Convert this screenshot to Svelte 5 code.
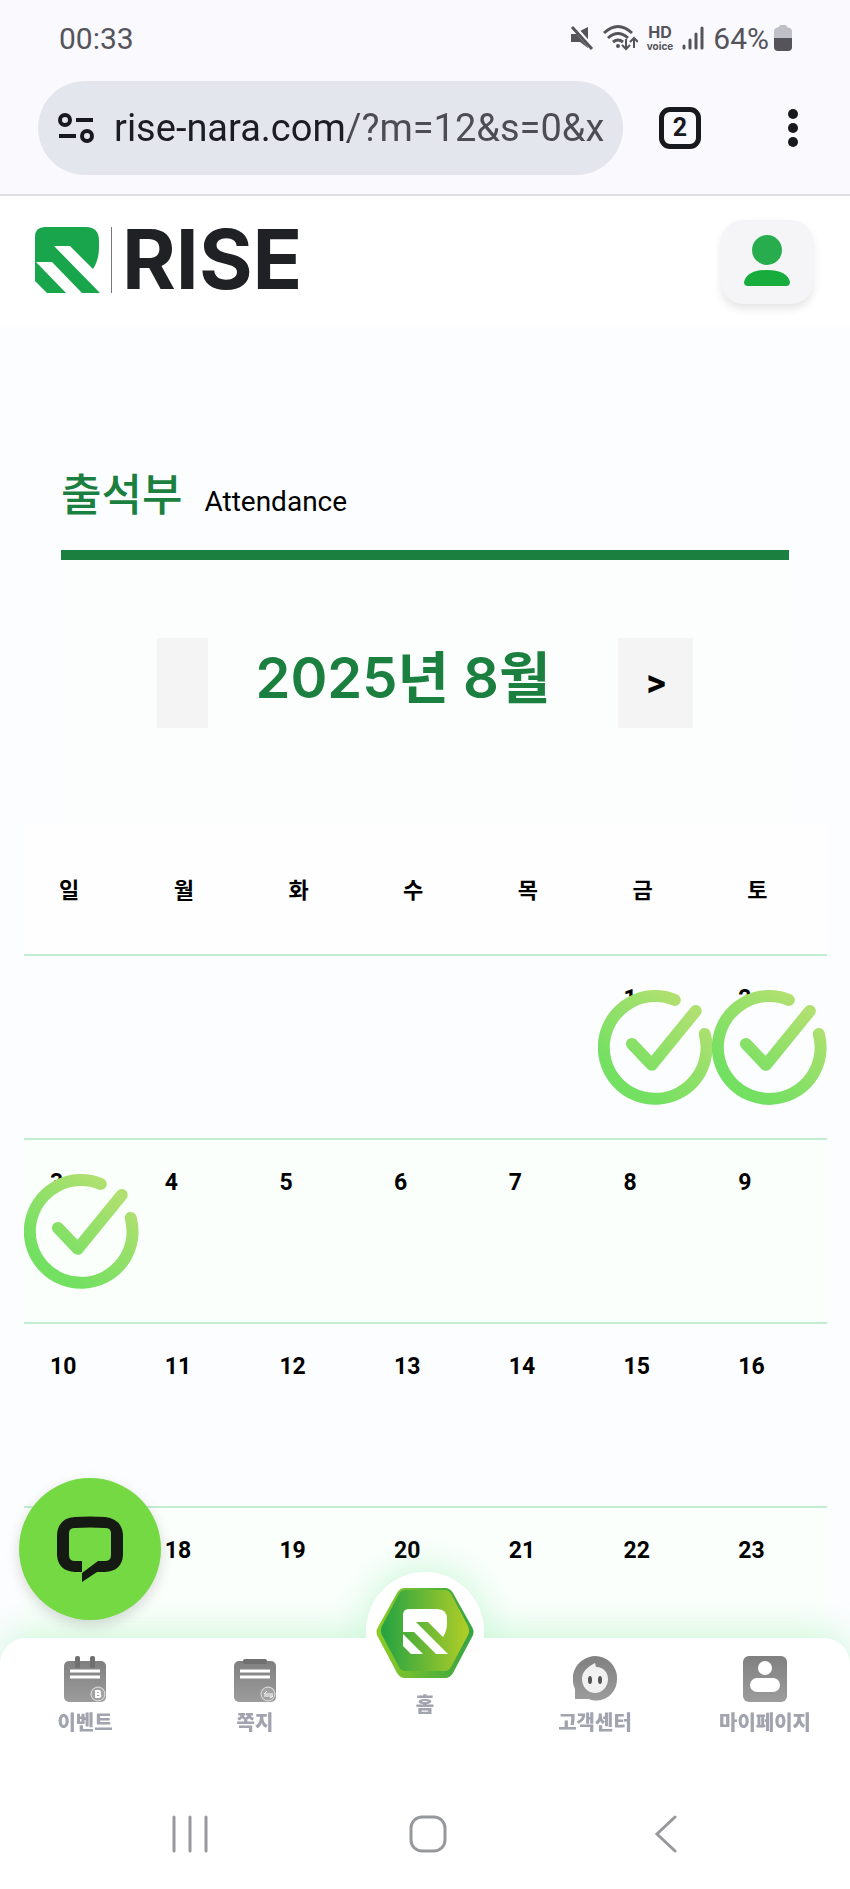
<script>
    const jours = ["일", "월", "화", "수", "목", "금", "토"];
    const semaines = [
        [null, null, null, null, null, 1, 2],
        [3, 4, 5, 6, 7, 8, 9],
        [10, 11, 12, 13, 14, 15, 16],
        [17, 18, 19, 20, 21, 22, 23],
    ];
    const presences = [1, 2, 3];

    let url = "rise-nara.com/?m=12&s=0&x";
</script>

<div class="screen">
    <div class="status">
        <span>00:33</span>
        <div class="status_icons">
            <svg width="24" height="24" viewBox="0 0 24 24" aria-hidden="true">
                <path d="M1 8h5l3-2 9 11v5l-8-6H1zM10 5l8-4v13z" fill="#55545a" />
                <path d="M3 0l20 23" stroke="#f9f9fe" stroke-width="5" />
                <path d="M2 1l20 22" stroke="#55545a" stroke-width="3" />
            </svg>
            <svg width="35" height="28" viewBox="0 0 35 28" fill="none" stroke="#55545a" stroke-width="3" aria-hidden="true">
                <path d="M1 9q14-13 28 0M5 14q10-9 20 0M10 18q5-4 10 0" />
                <circle cx="15" cy="22" r="2" fill="#55545a" stroke="none" />
                <path d="M23 15v10M19 21l4 4 4-4M31 24V14M27 18l4-4 4 4" stroke-width="2" />
            </svg>
            <div class="hd"><b>HD</b><small>voice</small></div>
            <svg width="22" height="24" viewBox="0 0 22 24" stroke="#55545a" stroke-width="3" stroke-linecap="round" aria-hidden="true">
                <path d="M2 20v2M8 14v8M14 8v14M20 2v20" />
            </svg>
            <span class="percent">64%</span>
            <svg width="18" height="26" viewBox="0 0 18 26" aria-hidden="true">
                <path d="M5 2q0-2 2-2h4q2 0 2 2l3 1q2 1 2 3v7H0V6q0-2 2-3z" fill="#bfbfc8" />
                <path d="M0 13h18v9q0 4-4 4H4q-4 0-4-4z" fill="#55545a" />
            </svg>
        </div>
    </div>

    <div class="toolbar">
        <label class="adresse">
            <svg width="36" height="30" viewBox="0 0 36 30" fill="none" stroke="#17191f" stroke-width="4" aria-hidden="true">
                <circle cx="7" cy="7" r="5" />
                <circle cx="29" cy="23" r="5" />
                <path d="M18 7h17M1 23h17" />
            </svg>
            <input type="text" aria-label="URL" bind:value={url}>
        </label>
        <button class="onglets">2</button>
        <button class="menu" aria-label="Menu">
            <svg width="10" height="38" viewBox="0 0 10 38" fill="#17191f">
                <circle cx="5" cy="5" r="5" />
                <circle cx="5" cy="19" r="5" />
                <circle cx="5" cy="33" r="5" />
            </svg>
        </button>
    </div>

    <header>
        <a href="./" class="logo">
            <svg width="65" height="66" viewBox="0 0 65 66" aria-hidden="true">
                <path d="M10 0h41q13 0 13 14v6q0 13-6 22L35 19H19l46 47H47L17 35H0V10Q0 0 10 0z" fill="#19a54c" />
                <path d="M0 34l31 32H12L0 54z" fill="#19a54c" />
            </svg>
            <span class="trait"></span>
            <span class="marque">RISE</span>
        </a>
        <button class="profil" aria-label="Profil">
            <svg width="46" height="52" viewBox="0 0 46 52" aria-hidden="true">
                <circle cx="23" cy="15" r="15" fill="#27ad4d" />
                <path d="M0 47q3-12 23-12t23 12q0 4-4 4H4q-4 0-4-4z" fill="#18ac3c" />
            </svg>
        </button>
    </header>

    <main>
        <div class="titre">
            <h1>출석부</h1>
            <span>Attendance</span>
        </div>

        <div class="mois">
            <button class="precedent" aria-label="이전"></button>
            <h2>2025년 8월</h2>
            <button class="suivant">&gt;</button>
        </div>

        <table>
            <thead>
                <tr>
                    {#each jours as jour}
                        <th scope="col">{jour}</th>
                    {/each}
                </tr>
            </thead>
            <tbody>
                {#each semaines as semaine}
                    <tr>
                        {#each semaine as date}
                            <td>
                                {#if date}{date}{/if}
                                {#if presences.includes(date)}
                                    <svg class="coche" viewBox="0 0 115 115" aria-hidden="true">
                                        <defs>
                                            <linearGradient id={"degrade" + date} gradientUnits="userSpaceOnUse" x1="35" y1="95" x2="95" y2="20">
                                                <stop offset="0" stop-color="#73e062" />
                                                <stop offset="1" stop-color="#b0e070" />
                                            </linearGradient>
                                        </defs>
                                        <g fill="none" stroke={"url(#degrade" + date + ")"} stroke-width="12" stroke-linecap="round" stroke-linejoin="round">
                                            <path d="M77 10A51.5 51.5 0 1 0 107 44" />
                                            <path d="M34 54l20 21 44-54" />
                                        </g>
                                    </svg>
                                {/if}
                            </td>
                        {/each}
                    </tr>
                {/each}
            </tbody>
        </table>
    </main>

    <div class="bas">
        <button class="chat" aria-label="Chat">
            <svg width="66" height="66" viewBox="0 0 66 66" aria-hidden="true">
                <path d="M18 1Q33 0 48 1q17 2 18 18v20q-1 16-18 17h-8L25 66V57L41 45h7q6 0 6-6V17q0-5-6-5-15-1-30 0-6 0-6 5v22q0 6 6 6h7v11h-7Q1 55 0 39V19Q1 2 18 1z" fill="#151a13" />
            </svg>
        </button>
        <footer>
            <nav>
                <a href="#event">
                    <svg width="42" height="47" viewBox="0 0 42 47" aria-hidden="true">
                        <defs>
                            <linearGradient id="gris" x2="0" y2="1">
                                <stop offset="0" stop-color="#808080" />
                                <stop offset="1" stop-color="#9c9c9c" />
                            </linearGradient>
                        </defs>
                        <rect y="5" width="42" height="41" rx="5" fill="url(#gris)" />
                        <rect x="11" width="5" height="12" rx="2" fill="#707070" />
                        <rect x="26" width="5" height="12" rx="2" fill="#707070" />
                        <path d="M6 15h30M6 21h30" stroke="#fff" stroke-width="3" />
                        <circle cx="34" cy="38" r="7" fill="#a2a2a2" stroke="#e4e4e4" stroke-width="1" />
                        <path d="M32 35h3q2 1 0 3 3 2 0 3h-3zM32 38h3" fill="none" stroke="#fff" stroke-width="2" />
                    </svg>
                    이벤트
                </a>
                <a href="#message">
                    <svg width="42" height="47" viewBox="0 0 42 47" aria-hidden="true">
                        <rect y="5" width="42" height="41" rx="5" fill="url(#gris)" />
                        <rect x="9" y="3" width="24" height="5" rx="2" fill="#707070" />
                        <path d="M6 15h30M6 21h30" stroke="#fff" stroke-width="3" />
                        <circle cx="34" cy="38" r="7" fill="#a2a2a2" stroke="#e4e4e4" stroke-width="1" />
                        <path d="M39 38h-9l3-3M30 40h9l-3 2" fill="none" stroke="#fff" stroke-width="1" />
                    </svg>
                    쪽지
                </a>
                <a href="#home" class="accueil">
                    <span class="rond">
                        <svg width="98" height="92" viewBox="0 0 98 92" aria-hidden="true">
                            <defs>
                                <linearGradient id="hexa">
                                    <stop offset="0" stop-color="#23a243" />
                                    <stop offset="1" stop-color="#b1ce26" />
                                </linearGradient>
                                <linearGradient id="bord">
                                    <stop offset="0" stop-color="#8ecb25" />
                                    <stop offset="1" stop-color="#35a344" />
                                </linearGradient>
                            </defs>
                            <path d="M29 1h40q5 0 8 5l19 34q3 5 0 10L77 86q-3 5-8 5H29q-5 0-8-5L2 50q-3-5 0-10L21 6q3-5 8-5z" fill="url(#bord)" />
                            <path d="M30 3h38q5 0 7 4l17 32q2 5 0 9L75 80q-2 4-7 4H30q-5 0-7-4L6 48q-2-5 0-9L23 7q2-4 7-4z" fill="url(#hexa)" />
                            <g fill="#fff">
                                <path d="M33 22h28q10 0 10 10v4q0 8-4 14L52 35H40l32 32H60L38 45H27V28q0-6 6-6z" />
                                <path d="M27 47l20 20H35l-8-8z" />
                            </g>
                        </svg>
                    </span>
                    홈
                </a>
                <a href="#support">
                    <svg width="44" height="47" viewBox="0 0 44 47" aria-hidden="true">
                        <path d="M22 0a22 22 0 0 1 22 23c0 18-18 25-28 20H2V33A23 23 0 0 1 22 0z" fill="url(#gris)" />
                        <path d="M22 7l1 4c9 0 12 7 12 12 0 8-6 14-13 14S9 31 9 23c0-8 6-12 13-16z" fill="#f1f1f1" />
                        <ellipse cx="17" cy="24" rx="2" ry="4" fill="#555" />
                        <ellipse cx="27" cy="24" rx="2" ry="4" fill="#555" />
                    </svg>
                    고객센터
                </a>
                <a href="#mypage">
                    <svg width="44" height="47" viewBox="0 0 44 47" aria-hidden="true">
                        <rect width="44" height="46" rx="6" fill="url(#gris)" />
                        <circle cx="22" cy="12" r="7" fill="#fff" />
                        <rect x="7" y="22" width="30" height="14" rx="7" fill="#fff" />
                    </svg>
                    마이페이지
                </a>
            </nav>
            <div class="systeme">
                <button aria-label="Recents">
                    <svg width="36" height="38" viewBox="0 0 36 38"><path d="M2 2v34M18 2v34M34 2v34" /></svg>
                </button>
                <button aria-label="Home">
                    <svg width="38" height="38" viewBox="0 0 38 38"><rect x="2" y="2" width="34" height="34" rx="11" /></svg>
                </button>
                <button aria-label="Back">
                    <svg width="24" height="38" viewBox="0 0 24 38"><path d="M21 2L3 19l18 17" /></svg>
                </button>
            </div>
        </footer>
    </div>
</div>

<style>
    :global(body){
        margin: 0px;
        background-color: #fcfdff;
    }
    .screen{
        display: flex;
        flex-direction: column;
        height: 100vh;
        font-family: Roboto, "Noto Sans CJK KR", sans-serif;
        color: #000;
    }
    button{
        border: none;
        padding: 0px;
        background: none;
        font-family: inherit;
        color: inherit;
        cursor: pointer;
    }
    svg{
        display: block;
        flex: none;
    }

    .status{
        display: flex;
        justify-content: space-between;
        align-items: center;
        height: 76px;
        padding: 0px 58px 0px 59px;
        background-color: #f9f9fe;
        color: #55545a;
        font-size: 30px;
    }
    .status_icons{
        display: flex;
        align-items: center;
        gap: 9px;
    }
    .percent{
        margin-right: -4px;
    }
    .hd{
        display: flex;
        flex-direction: column;
        align-items: center;
        font-family: Inter, sans-serif;
        font-size: 16px;
        line-height: 16px;
    }
    .hd small{
        font-size: 10px;
        font-weight: 700;
        line-height: 12px;
    }

    .toolbar{
        display: flex;
        align-items: center;
        padding: 5px 50px 19px 38px;
        background-color: #f9f9fe;
        border-bottom: 2px solid #dfdfe6;
    }
    .adresse{
        display: flex;
        align-items: center;
        gap: 20px;
        flex: 1;
        height: 94px;
        box-sizing: border-box;
        padding: 0px 18px 0px 20px;
        border-radius: 47px;
        background-color: #e4e6ed;
    }
    .adresse input{
        flex: 1;
        min-width: 0px;
        padding: 0px;
        border: none;
        outline: none;
        font-family: inherit;
        font-size: 38px;
        /* le domaine est plus foncé que le reste de l'adresse */
        background: linear-gradient(90deg, #1b1d23 232px, #4b4d53 236px);
        background-clip: text;
        color: transparent;
    }
    .onglets{
        width: 42px;
        height: 42px;
        margin-left: 36px;
        border: 5px solid #17191f;
        border-radius: 11px;
        font-size: 25px;
        font-weight: 700;
        line-height: 32px;
        color: #17191f;
    }
    .menu{
        display: flex;
        justify-content: center;
        width: 14px;
        margin-left: 85px;
    }

    header{
        display: flex;
        justify-content: space-between;
        align-items: flex-start;
        padding: 24px 37px 22px 35px;
        background-color: #fff;
    }
    .logo{
        display: flex;
        align-items: center;
        margin-top: 7px;
        text-decoration: none;
    }
    .trait{
        width: 1px;
        height: 66px;
        margin: 0px 10px 0px 11px;
        background-color: #77787c;
    }
    .marque{
        font-family: Inter, sans-serif;
        font-size: 82px;
        font-weight: 700;
        line-height: 66px;
        color: #202124;
    }
    .profil{
        display: flex;
        justify-content: center;
        width: 92px;
        height: 84px;
        padding-top: 15px;
        border-radius: 22px;
        background-color: #f5f5f7;
        box-shadow: 0px 5px 8px rgba(0, 0, 0, 0.1);
    }

    main{
        flex: 1;
        min-height: 0px;
        overflow: hidden;
        padding: 0px 23px 0px 24px;
    }
    .titre{
        display: flex;
        align-items: baseline;
        gap: 22px;
        margin: 138px 38px 0px 37px;
        padding-bottom: 22px;
        border-bottom: 10px solid #1b7f3f;
    }
    .titre h1{
        margin: 0px;
        font-size: 44px;
        font-weight: 500;
        line-height: 64px;
        color: #1b7f3f;
    }
    .titre span{
        font-size: 28px;
    }
    .mois{
        display: flex;
        justify-content: center;
        align-items: flex-start;
        margin: 0px 38px 0px 37px;
        padding: 78px 0px 97px;
        background-color: #fbfefc;
    }
    .mois h2{
        margin: 0px 68px 0px 48px;
        font-family: Inter, "Noto Sans CJK KR", sans-serif;
        font-size: 56px;
        font-weight: 600;
        line-height: 80px;
        color: #1b7f3f;
    }
    .mois button{
        height: 90px;
        background-color: #f4f4f4;
        font-size: 38px;
        font-weight: 700;
    }
    .precedent{
        width: 51px;
    }
    .suivant{
        width: 75px;
    }

    table{
        width: 100%;
        table-layout: fixed;
        border-collapse: collapse;
    }
    thead{
        background-color: #fefefe;
    }
    th{
        height: 130px;
        padding: 0px 0px 4px 35px;
        box-sizing: border-box;
        font-size: 22px;
        text-align: left;
    }
    td{
        position: relative;
        height: 184px;
        box-sizing: border-box;
        padding: 29px 0px 0px 26px;
        border-top: 2px solid #c3edd2;
        vertical-align: top;
        font-size: 23px;
        font-weight: 700;
    }
    tbody tr:nth-child(even){
        background-color: #fbfffc;
    }
    .coche{
        position: absolute;
        top: 34px;
        left: 0px;
        width: 100%;
    }

    .bas{
        position: relative;
    }
    .chat{
        position: absolute;
        z-index: 2;
        left: 19px;
        bottom: 100%;
        display: flex;
        justify-content: center;
        align-items: center;
        width: 142px;
        height: 142px;
        margin-bottom: 18px;
        border-radius: 50%;
        background-color: #74d942;
        box-shadow: 0px 5px 14px rgba(0, 0, 0, 0.15);
    }
    footer{
        filter: drop-shadow(0px -4px 20px rgba(90, 225, 130, 0.3));
    }
    nav{
        display: grid;
        grid-template-columns: repeat(5, 1fr);
        height: 140px;
        border-radius: 26px 26px 0px 0px;
        background-color: #fff;
    }
    nav a{
        display: flex;
        flex-direction: column;
        align-items: center;
        gap: 5px;
        padding-top: 18px;
        font-family: "Noto Sans CJK KR", sans-serif;
        font-size: 20px;
        font-weight: 900;
        line-height: 28px;
        color: #a1a3ae;
        text-decoration: none;
    }
    nav .accueil{
        gap: 0px;
        padding-top: 0px;
    }
    .rond{
        display: flex;
        justify-content: center;
        width: 118px;
        height: 118px;
        box-sizing: border-box;
        margin-top: -66px;
        padding-top: 15px;
        border-radius: 50%;
        background-color: #fff;
    }
    .systeme{
        display: flex;
        justify-content: center;
        gap: 194px;
        padding: 37px 0px 36px 6px;
        background-color: #fff;
    }
    .systeme button{
        display: flex;
        justify-content: center;
        width: 44px;
    }
    .systeme svg{
        fill: none;
        stroke: #96989c;
        stroke-width: 3;
        stroke-linecap: round;
    }
</style>
